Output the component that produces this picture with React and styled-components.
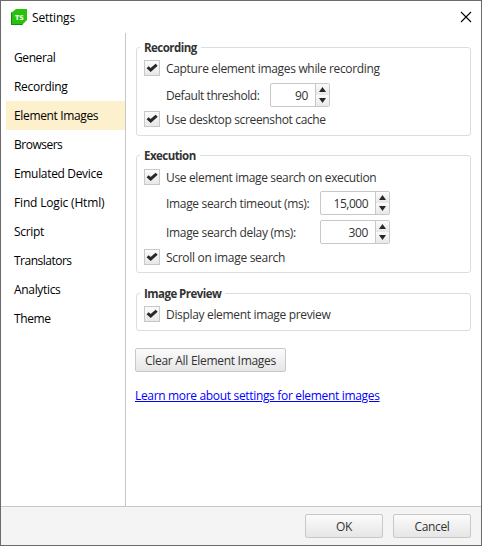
import React from "react";
import styled, { createGlobalStyle } from "styled-components";

const Global = createGlobalStyle`
  * { box-sizing: border-box; }
  body { margin: 0; background: #fff; }
`;

const Window = styled.div`
  width: 482px;
  height: 546px;
  border: 1px solid #6b6b6d;
  background: #fff;
  display: flex;
  flex-direction: column;
  font: 12px/16px "Open Sans", "Noto Sans", sans-serif;
  color: #333;
  white-space: nowrap;
  overflow: hidden;
`;

const TitleBar = styled.header`
  flex: 0 0 32px;
  display: flex;
  align-items: center;
  padding: 0 9px 0 10px;
  color: #000;
`;

const Logo = styled.svg`
  width: 17px;
  height: 17px;
  margin-right: 4px;
`;

const CloseIcon = styled.svg`
  width: 12px;
  height: 12px;
  margin-left: auto;
`;

const Label = styled.span`
  display: inline-block;
  padding-top: ${(p) => p.$drop ?? 2}px;
  letter-spacing: ${(p) => p.$track ?? -0.33}px;
  text-decoration: inherit;
`;

const Body = styled.main`
  flex: 1;
  display: flex;
  min-height: 0;
`;

const Nav = styled.nav`
  width: 125px;
  padding: 10px 0 0 5px;
  border-right: 1px solid #c8c8c8;
  color: #000;
`;

const NavItem = styled.div`
  height: 29px;
  padding-left: 8px;
  display: flex;
  align-items: center;
  background: ${(p) => (p.$active ? "#fdf0cd" : "transparent")};
`;

const Content = styled.section`
  flex: 1;
  padding: 14px 10px 0 10px;
`;

const Group = styled.section`
  height: ${(p) => p.$height}px;
  margin-bottom: ${(p) => p.$gap}px;
  border: 1px solid #d5dfe5;
  border-radius: 3px;
  padding: 0 7px;
`;

const Legend = styled.h2`
  width: fit-content;
  height: 16px;
  margin: -8px 0 0 -4px;
  padding: 0 4px;
  background: #fff;
  font-size: 11.5px;
  line-height: 16px;
  font-weight: 700;
  letter-spacing: -0.54px;
`;

const CheckRow = styled.div`
  display: flex;
  align-items: center;
  height: 16px;
  margin-top: ${(p) => p.$top}px;
  gap: 6px;
`;

const Box = styled.span`
  width: 16px;
  height: 16px;
  border: 1px solid #c8c8c8;
  background: linear-gradient(#fbfbfb, #e8e8e8);
  display: grid;
  place-items: center;
`;

const Field = styled.div`
  display: flex;
  align-items: center;
  height: 24px;
  margin: ${(p) => p.$top}px 0 0 22px;
`;

const FieldName = styled.span`
  width: ${(p) => p.$width}px;
`;

const Spinner = styled.div`
  width: ${(p) => p.$width}px;
  height: 24px;
  display: flex;
  border: 1px solid #c8c8c8;
  border-radius: 2px;
  overflow: hidden;
`;

const Value = styled.span`
  flex: 1;
  display: flex;
  align-items: center;
  justify-content: flex-end;
  padding-right: 7px;
`;

const Steps = styled.span`
  width: 14px;
  border-left: 1px solid #c8c8c8;
  display: grid;
  grid-template-rows: 11px 11px;
`;

const Step = styled.span`
  display: grid;
  place-items: center;
  background: linear-gradient(#fbfbfb, #e8e8e8);
`;

const Button = styled.button`
  width: ${(p) => p.$width}px;
  height: 24px;
  padding: 0;
  display: flex;
  align-items: center;
  justify-content: center;
  border: 1px solid #c8c8c8;
  border-radius: 2px;
  background: linear-gradient(#fbfbfb, #e6e6e6);
  font: inherit;
  color: #333;
`;

const Link = styled.a`
  display: block;
  width: fit-content;
  margin-top: 14px;
  color: #00f;
  text-decoration: underline;
`;

const Actions = styled.div`
  margin: 0 -1px;
`;

const Footer = styled.footer`
  flex: 0 0 39px;
  border-top: 1px solid #c8c8c8;
  background: #f4f4f4;
  display: flex;
  justify-content: flex-end;
  gap: 10px;
  padding: 7px 10px 0;
`;

function Check({ children, top, track }) {
  return (
    <CheckRow $top={top}>
      <Box>
        <svg width="14" height="14" viewBox="0 0 14 14">
          <path d="M1.6 7.2 3.6 5.2 5.6 6.9 10.6 2.8 12.7 4.7 5.7 11.1Z" fill="#282828" />
        </svg>
      </Box>
      <Label $track={track}>{children}</Label>
    </CheckRow>
  );
}

function NumberField({ name, value, top, nameWidth, width, track, valueTrack }) {
  return (
    <Field $top={top}>
      <FieldName $width={nameWidth}>
        <Label $track={track}>{name}</Label>
      </FieldName>
      <Spinner $width={width}>
        <Value><Label $track={valueTrack}>{value}</Label></Value>
        <Steps>
          <Step>
            <svg width="7" height="5" viewBox="0 0 7 5"><path d="M0 5 3.5 0 7 5Z" fill="#282828" /></svg>
          </Step>
          <Step>
            <svg width="7" height="5" viewBox="0 0 7 5"><path d="M0 0H7L3.5 5Z" fill="#282828" /></svg>
          </Step>
        </Steps>
      </Spinner>
    </Field>
  );
}

const sections = [
  ["General", -0.4],
  ["Recording", -0.3],
  ["Element Images", -0.35],
  ["Browsers", -0.5],
  ["Emulated Device", -0.33],
  ["Find Logic (Html)", -0.17],
  ["Script", -0.3],
  ["Translators", -0.5],
  ["Analytics", -0.33],
  ["Theme", -0.4],
];

export default function App() {
  return (
    <>
      <Global />
      <Window>
        <TitleBar>
          <Logo viewBox="0 0 17 17">
            <path d="M5 0H16V11L11 16H0V4Z" fill="#28c20a" />
            <path d="M0 4V16H11L12 15H1V3Z" fill="#168a0b" />
            <text x="8.4" y="10.7" textAnchor="middle" fontFamily="DejaVu Sans, sans-serif" fontSize="6.4" fontWeight="700" fill="#fff">TS</text>
          </Logo>
          <Label $track={-0.2}>Settings</Label>
          <CloseIcon viewBox="0 0 12 12">
            <path d="M1 1 11 11M11 1 1 11" stroke="#000" strokeWidth="1.1" fill="none" />
          </CloseIcon>
        </TitleBar>
        <Body>
          <Nav>
            {sections.map(([name, track]) => (
              <NavItem key={name} $active={name === "Element Images"}>
                <Label $drop={0} $track={track}>{name}</Label>
              </NavItem>
            ))}
          </Nav>
          <Content>
            <Group $height={89} $gap={19}>
              <Legend>Recording</Legend>
              <Check top={4}>Capture element images while recording</Check>
              <NumberField top={7} name="Default threshold:" value="90" nameWidth={104} width={60} track={-0.42} />
              <Check top={4} track={-0.35}>Use desktop screenshot cache</Check>
            </Group>
            <Group $height={118} $gap={20}>
              <Legend>Execution</Legend>
              <Check top={5} track={-0.35}>Use element image search on execution</Check>
              <NumberField top={6} name="Image search timeout (ms):" value="15,000" nameWidth={154} width={70} valueTrack={-0.5} />
              <NumberField top={5} name="Image search delay (ms):" value="300" nameWidth={154} width={70} track={-0.33} />
              <Check top={5} track={-0.3}>Scroll on image search</Check>
            </Group>
            <Group $height={38} $gap={17}>
              <Legend>Image Preview</Legend>
              <Check top={4}>Display element image preview</Check>
            </Group>
            <Actions>
              <Button $width={151}><Label $track={-0.29}>Clear All Element Images</Label></Button>
              <Link><Label>Learn more about settings for element images</Label></Link>
            </Actions>
          </Content>
        </Body>
        <Footer>
          <Button $width={78}><Label>OK</Label></Button>
          <Button $width={78}><Label>Cancel</Label></Button>
        </Footer>
      </Window>
    </>
  );
}
